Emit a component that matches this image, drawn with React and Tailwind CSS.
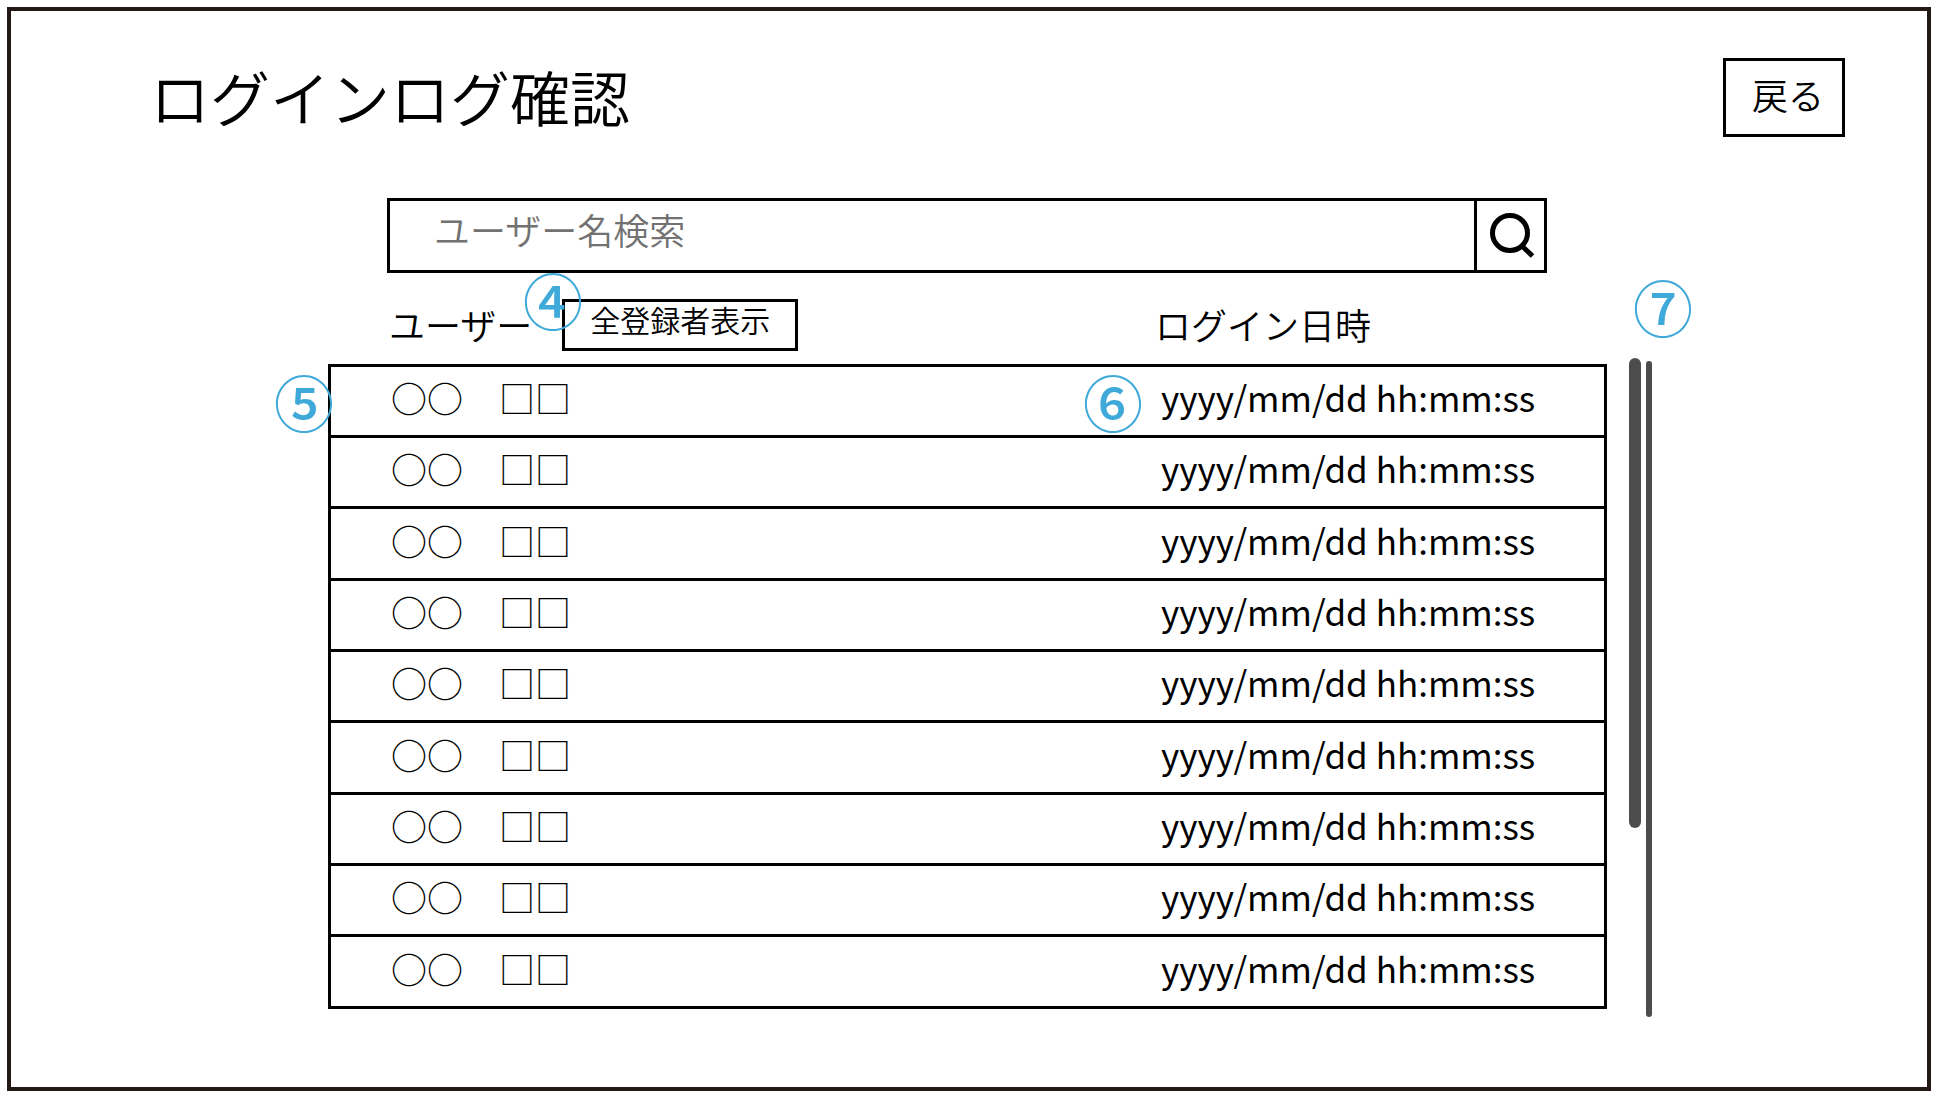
const rows = Array.from({ length: 9 }, (_, i) => ({
  id: i + 1,
  name: "○○　□□",
  time: "yyyy/mm/dd hh:mm:ss",
}));

function Marker({ children, className }) {
  return (
    <span
      className={`absolute z-10 text-[60px] leading-[60px] font-medium text-[#3fa9d9] ${className}`}
    >
      {children}
    </span>
  );
}

function SearchIcon() {
  return (
    <svg viewBox="0 0 48 48" className="size-12" fill="none" stroke="#000" aria-hidden="true">
      <circle cx="23" cy="21" r="17.5" strokeWidth="5" />
      <path d="M34.5 33.5 L45.5 44" strokeWidth="5" />
    </svg>
  );
}

export default function App() {
  return (
    <div className="flex min-h-screen bg-white p-[7px] font-['Noto_Sans_CJK_JP',sans-serif] font-[350] text-black">
      <div className="flex-1 border-4 border-[#231815]">
        <header className="flex items-start justify-between pt-[47px] pr-[82px] pl-[139px]">
          <h1 className="pt-2 text-[60px] leading-[60px]">ログインログ確認</h1>
          <button type="button" className="border-3 border-black pt-[15px] pr-[18px] pb-[22px] pl-[26px] text-4xl leading-9">
            戻る
          </button>
        </header>

        <main className="pt-[61px] pr-[275px] pl-[317px]">
          <form
            className="mr-[105px] ml-[59px] flex h-[75px] border-3 border-black"
            onSubmit={(e) => e.preventDefault()}
          >
            <input
              type="text"
              aria-label="ユーザー名検索"
              placeholder="ユーザー名検索"
              className="min-w-0 flex-1 pb-3.5 pl-11 text-4xl outline-none placeholder:text-[#727272]"
            />
            <button
              type="submit"
              aria-label="検索"
              className="flex w-[70px] items-center justify-center border-l-3 border-black"
            >
              <SearchIcon />
            </button>
          </form>

          <div className="flex items-start">
            <table className="flex-1 table-fixed border-separate border-spacing-0 text-left text-4xl leading-9">
              <colgroup>
                <col />
                <col className="w-[452px]" />
              </colgroup>
              <thead>
                <tr className="h-[94px]">
                  <th scope="col" className="border-b-3 border-black p-0 pt-3 pl-[61px] font-[350]">
                    <div className="relative flex items-start">
                      <span className="pt-[7px]">ユーザー</span>
                      <Marker className="-top-[30px] left-[134px]">④</Marker>
                      <button
                        type="button"
                        className="ml-[30px] border-3 border-black px-[25px] pb-3 text-3xl leading-[34px]"
                      >
                        全登録者表示
                      </button>
                    </div>
                  </th>
                  <th scope="col" className="border-b-3 border-black p-0 pt-2.5 font-[350]">
                    ログイン日時
                  </th>
                </tr>
              </thead>
              <tbody>
                {rows.map((row, i) => (
                  <tr key={row.id} className="h-[71px] nth-[3n]:h-[72px]">
                    <td className="relative border-b-3 border-l-3 border-black p-0 pb-2 pl-[60px] font-normal">
                      {i === 0 && <Marker className="top-1 -left-[57px]">⑤</Marker>}
                      {row.name}
                    </td>
                    <td className="relative border-r-3 border-b-3 border-black p-0 pb-2 pl-[6px] text-[35px] font-normal">
                      {i === 0 && <Marker className="top-1 -left-[72px]">⑥</Marker>}
                      {row.time}
                    </td>
                  </tr>
                ))}
              </tbody>
            </table>

            <div className="relative ml-[22px] flex items-start gap-[5px] pt-[85px]">
              <Marker className="top-[3px] left-1">⑦</Marker>
              <div className="h-[470px] w-3 rounded-full bg-[#4d4d4d]" />
              <div className="mt-[3px] h-[656px] w-1.5 rounded-full bg-[#4d4d4d]" />
            </div>
          </div>
        </main>
      </div>
    </div>
  );
}
